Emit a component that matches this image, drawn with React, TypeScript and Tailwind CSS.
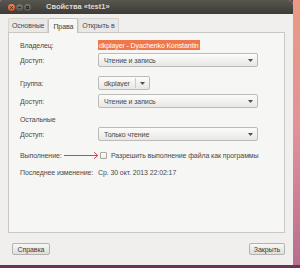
function Combo({ text, w, sep }: { text: string; w: string; sep?: boolean }) {
  return (
    <div className={`${w} h-[14px] flex items-center rounded-[2px] border border-[#bdbbb7] bg-gradient-to-b from-[#fcfcfb] to-[#e8e7e5] pl-[5px] pr-[4px]`}>
      <span className="flex-1 truncate">{text}</span>
      {sep && <span className="w-px h-[10px] bg-[#cfcdca] mr-[4px]" />}
      <svg width="5" height="3" viewBox="0 0 5 3">
        <path d="M0 0h5L2.5 3z" fill="#505050" />
      </svg>
    </div>
  )
}

function Row({ label, children, className }: { label: React.ReactNode; children?: React.ReactNode; className: string }) {
  return (
    <div className={`flex items-center whitespace-nowrap ${className}`}>
      <div className="w-[78px] shrink-0 flex items-center">{label}</div>
      {children}
    </div>
  )
}

export default function App() {
  return (
    <div className="w-[300px] h-[268px] overflow-hidden flex flex-col bg-[#6c3358] font-['Liberation_Sans',sans-serif] text-[7px] tracking-[-0.1px] leading-none text-[#4a4a48]">
      <div className="flex h-[265px]">
        <div className="w-[293px] flex flex-col bg-[#f0efee] rounded-tr-[5px] rounded-tl-[2px]">
          {/* title bar */}
          <div className="h-[14px] flex items-center rounded-tr-[5px] rounded-tl-[2px] bg-gradient-to-b from-[#57564f] to-[#3c3b37] pl-[8px]">
            <div className="flex items-center gap-[1px]">
              <div className="size-[7px] rounded-full bg-gradient-to-b from-[#f58a62] to-[#d9461c] flex items-center justify-center">
                <svg width="3" height="3" viewBox="0 0 3 3"><path d="M0 0L3 3M3 0L0 3" stroke="#5a2410" strokeWidth="0.8" /></svg>
              </div>
              <div className="size-[7px] rounded-full bg-gradient-to-b from-[#7a7872] to-[#55544f] flex items-center justify-center">
                <span className="w-[3px] h-px bg-[#2e2d2a]" />
              </div>
              <div className="size-[7px] rounded-full bg-gradient-to-b from-[#7a7872] to-[#55544f] flex items-center justify-center">
                <span className="size-[3px] border border-[#2e2d2a]" />
              </div>
            </div>
            <span className="ml-[15px] font-bold text-[7.5px] tracking-normal text-[#dfdbd2]">Свойства «test1»</span>
          </div>

          {/* tabs */}
          <div className="flex items-end pl-[8px] mt-[4px]">
            <div className="h-[14px] px-[3px] flex items-center border border-b-0 border-[#d6d4d0] rounded-t-[2px] bg-[#e9e8e6]">Основные</div>
            <div className="relative z-10 h-[15px] px-[4px] mb-[-1px] flex items-center border border-b-0 border-[#c4c2be] rounded-t-[2px] bg-[#f6f6f5] text-[#3c3c3a]">Права</div>
            <div className="h-[14px] px-[3px] flex items-center border border-b-0 border-[#d6d4d0] rounded-t-[2px] bg-[#e9e8e6]">Открыть в</div>
          </div>

          {/* panel */}
          <div className="mx-[8px] h-[201px] border border-[#cac8c4] bg-[#f6f6f5] flex flex-col pl-[11px]">
            <Row label="Владелец:" className="h-[10px] mt-[7px]">
              <span className="bg-[#f0774a] text-white px-[1px] py-[1.5px]">dkplayer - Dyachenko Konstantin</span>
            </Row>
            <Row label="Доступ:" className="mt-[3px]">
              <Combo text="Чтение и запись" w="w-[160px]" />
            </Row>
            <Row label="Группа:" className="mt-[9px]">
              <Combo text="dkplayer" w="w-[52px]" sep />
            </Row>
            <Row label="Доступ:" className="mt-[4px]">
              <Combo text="Чтение и запись" w="w-[160px]" />
            </Row>
            <div className="h-[10px] mt-[6px] flex items-center">Остальные</div>
            <Row label="Доступ:" className="mt-[3px]">
              <Combo text="Только чтение" w="w-[160px]" />
            </Row>
            <Row
              className="h-[10px] mt-[9px]"
              label={
                <>
                  <span>Выполнение:</span>
                  <svg className="ml-auto mr-[-1px]" width="35" height="9" viewBox="0 0 35 9">
                    <path d="M0 4.5H33.5M30 1.2L33.8 4.5L30 7.8" fill="none" stroke="#d8434b" strokeWidth="1" />
                  </svg>
                </>
              }
            >
              <span className="ml-[2px] size-[7px] shrink-0 border border-[#a9a7a3] rounded-[1px] bg-gradient-to-b from-white to-[#ebeae8]" />
              <span className="ml-[4px]">Разрешить выполнение файла как программы</span>
            </Row>
            <Row label="Последнее изменение:" className="h-[10px] mt-[7px]">
              <span>Ср. 30 окт. 2013 22:02:17</span>
            </Row>
          </div>

          {/* buttons */}
          <div className="flex justify-between mt-[10px] pl-[12px] pr-[8px]">
            <button className="w-[38px] h-[12px] flex items-center justify-center rounded-[2px] border border-[#b5b3af] bg-gradient-to-b from-[#f8f8f7] to-[#dfdedc] text-[#3c3c3a]">Справка</button>
            <button className="w-[36px] h-[12px] flex items-center justify-center rounded-[2px] border border-[#b5b3af] bg-gradient-to-b from-[#f8f8f7] to-[#dfdedc] text-[#3c3c3a]">Закрыть</button>
          </div>
        </div>
        <div className="flex-1 bg-gradient-to-b from-[#ec9a82] via-[#e2919a] to-[#b86d8e]" />
      </div>
      <div className="flex-1 bg-[#6c3358]" />
    </div>
  )
}
